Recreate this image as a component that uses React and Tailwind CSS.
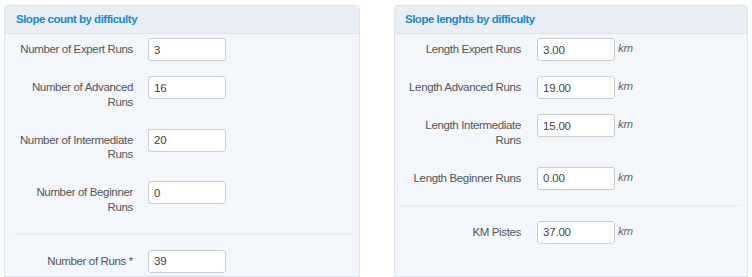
import React from 'react';

const countRows = [
  { label: 'Number of Expert Runs', value: '3' },
  { label: 'Number of Advanced Runs', value: '16' },
  { label: 'Number of Intermediate Runs', value: '20' },
  { label: 'Number of Beginner Runs', value: '0' },
];

const lengthRows = [
  { label: 'Length Expert Runs', value: '3.00' },
  { label: 'Length Advanced Runs', value: '19.00' },
  { label: 'Length Intermediate Runs', value: '15.00' },
  { label: 'Length Beginner Runs', value: '0.00' },
];

const Field = ({ label, value, unit, gap }) => (
  <div className="flex items-start mb-[15px]">
    <div className="w-[120px] shrink-0 flex justify-end">
      <label className="w-[116px] text-right pt-[4px] pb-[4.5px] leading-[14.5px] text-[#555] tracking-[-0.35px]">
        {label}
      </label>
    </div>
    <input
      type="text"
      readOnly
      value={value}
      className={`${gap} w-[78px] h-[23px] shrink-0 bg-white border border-[#cccccc] rounded-[3px] px-[5px] text-[11.5px] tracking-[-0.2px] text-[#444] outline-none`}
    />
    {unit && (
      <span className="ml-[3px] pt-[3px] leading-[14.5px] italic text-[#666] tracking-[-0.3px]">{unit}</span>
    )}
  </div>
);

const Panel = ({ title, width, headPad, bodyPad, children }) => (
  <div className={`${width} shrink-0 border border-[#dde3ea] rounded-t-[4px] bg-[#f3f7fb]`}>
    <div className={`h-[28px] flex items-center ${headPad} bg-[#e9eef4] border-b border-[#dde3ea] rounded-t-[4px]`}>
      <span className="font-bold text-[#1a87cf] tracking-[-0.5px]">{title}</span>
    </div>
    <div className={`pt-[4px] pb-[30px] ${bodyPad}`}>{children}</div>
  </div>
);

export default function App() {
  return (
    <div className="w-[752px] h-[277px] overflow-hidden bg-white pt-[5px] pl-[4px] flex gap-[34px] text-[11.5px] [font-family:'Liberation_Sans',Arial,sans-serif]">
      <Panel title="Slope count by difficulty" width="w-[356px]" headPad="pl-[11px]" bodyPad="px-[8px]">
        {countRows.map((r) => (
          <Field key={r.label} label={r.label} value={r.value} gap="ml-[15px]" />
        ))}
        <div className="h-px bg-[#e6ebf0] mb-[15px]" />
        <Field label="Number of Runs *" value="39" gap="ml-[15px]" />
      </Panel>
      <Panel title="Slope lenghts by difficulty" width="w-[354px]" headPad="pl-[10px]" bodyPad="pl-[6px] pr-[7px]">
        {lengthRows.map((r) => (
          <Field key={r.label} label={r.label} value={r.value} unit="km" gap="ml-[16px]" />
        ))}
        <div className="h-px bg-[#e6ebf0] mb-[15px]" />
        <Field label="KM Pistes" value="37.00" unit="km" gap="ml-[16px]" />
      </Panel>
    </div>
  );
}
